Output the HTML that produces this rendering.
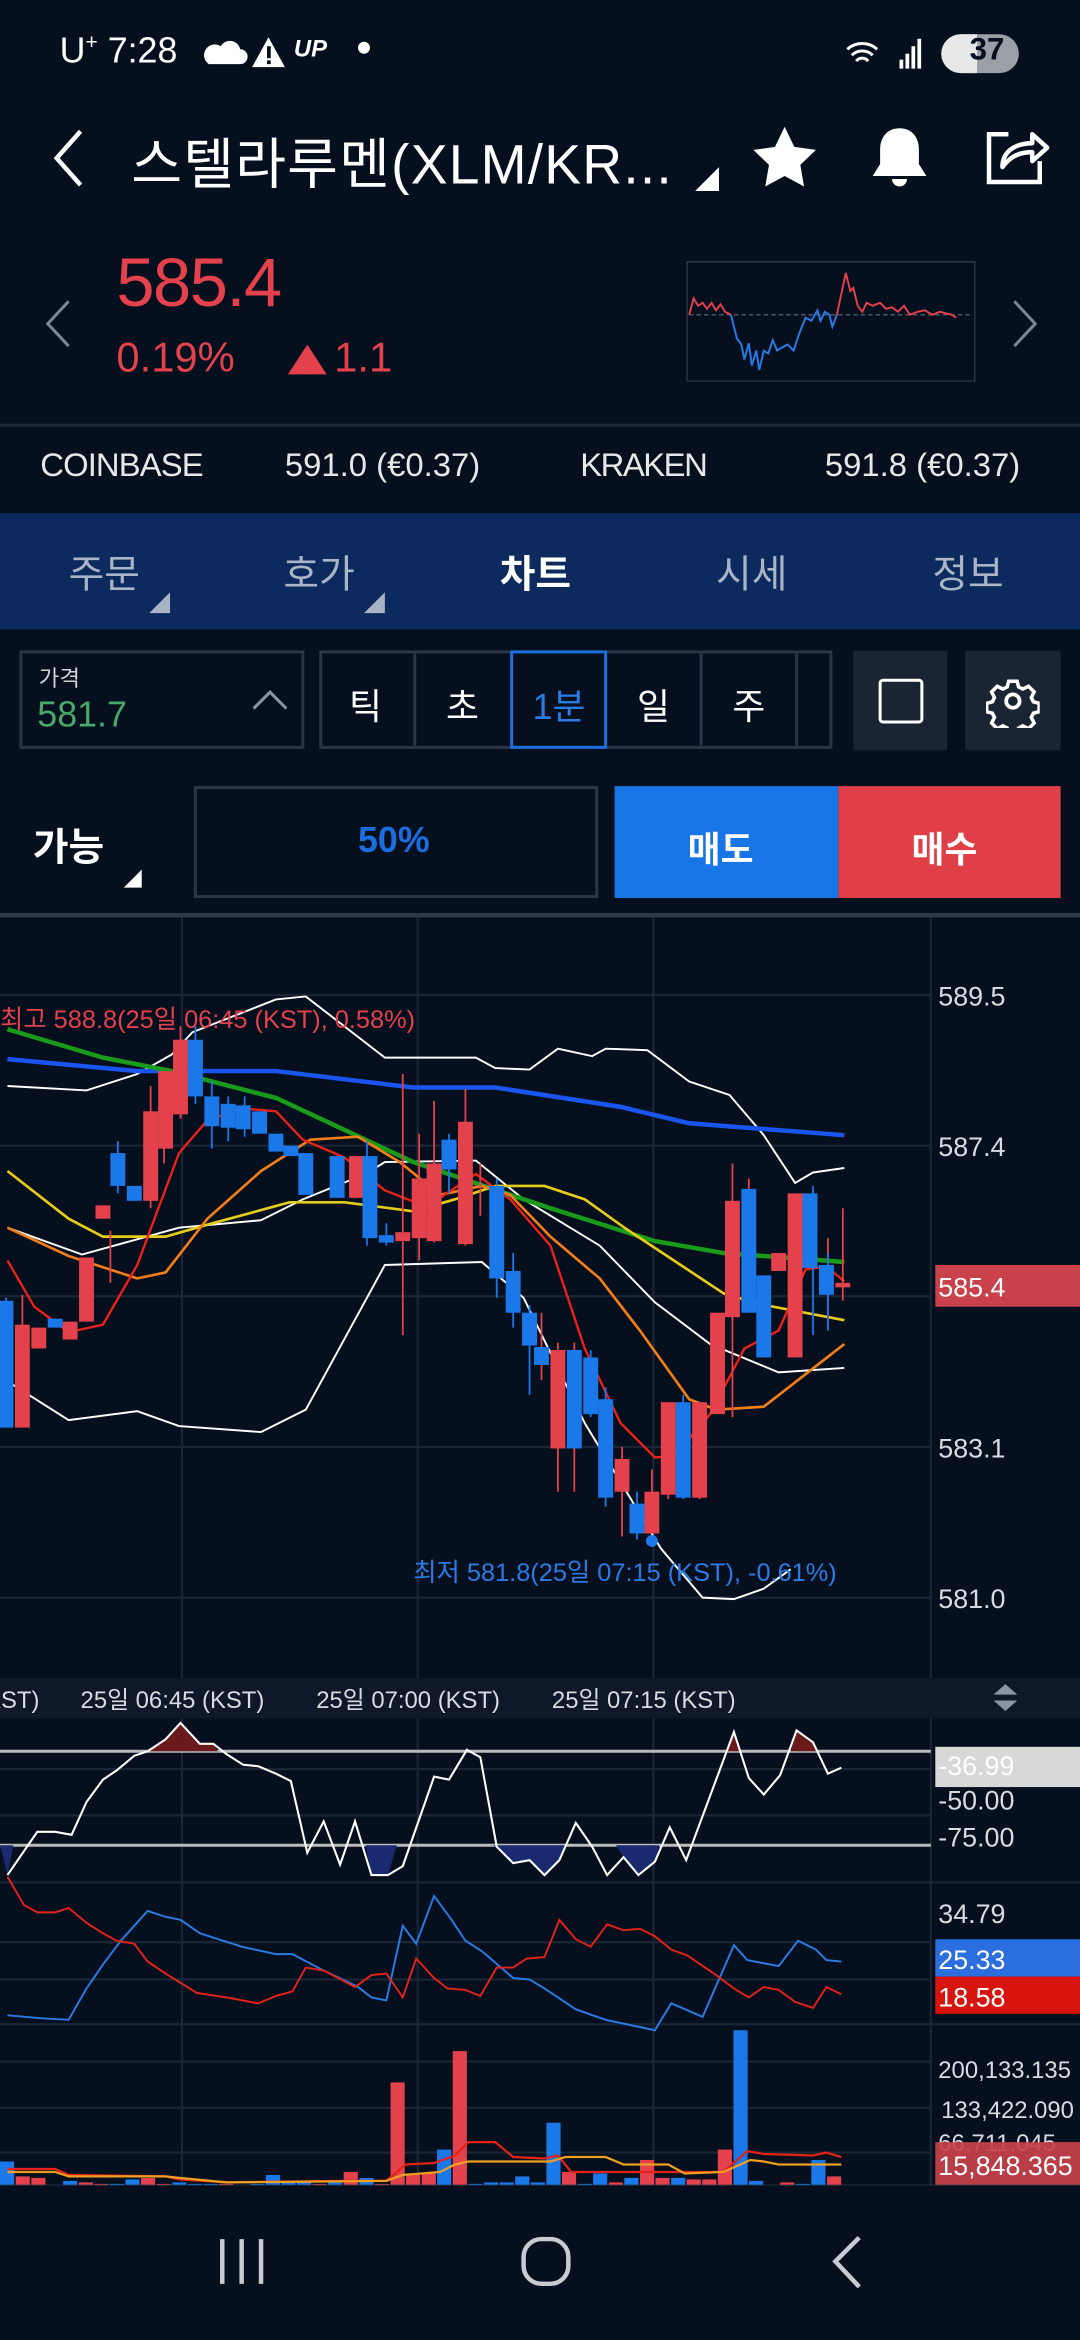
<!DOCTYPE html>
<html><head><meta charset="utf-8">
<style>
*{margin:0;padding:0;box-sizing:border-box}
html,body{width:1080px;height:2340px;background:#050f1e;overflow:hidden}
#w{position:absolute;left:0;top:0;width:724px;height:1568px;transform:scale(1.49172);transform-origin:0 0;font-family:"Liberation Sans","Noto Sans CJK KR",sans-serif;color:#fff}
.a{position:absolute;white-space:nowrap}
</style></head><body><div id="w">
<!-- status -->
<div class="a" style="left:40px;top:20px;font-size:24px;">U<sup style="font-size:14px">+</sup> 7:28</div>
<svg class="a" style="left:136px;top:26px" width="30" height="20"><path d="M4 17h21a5 5 0 0 0 0-10 7 7 0 0 0-13-2 6 6 0 0 0-8 12z" fill="#fff"/></svg>
<svg class="a" style="left:168px;top:24px" width="24" height="22"><path d="M12 1L23 21H1Z" fill="#fff"/><rect x="11" y="7" width="2.5" height="8" fill="#050f1e"/><rect x="11" y="16.5" width="2.5" height="2.5" fill="#050f1e"/></svg>
<div class="a" style="left:197px;top:25px;font-size:16px;font-style:italic;font-weight:bold">UP</div>
<div class="a" style="left:240px;top:28px;width:8px;height:8px;border-radius:4px;background:#fff"></div>
<svg class="a" style="left:566px;top:24px" width="56" height="24"><path d="M2 9a15 15 0 0 1 20 0M5 13a10 10 0 0 1 14 0M8 17a5 5 0 0 1 8 0" stroke="#fff" stroke-width="2" fill="none"/><rect x="37" y="16" width="2.5" height="6" fill="#fff"/><rect x="41" y="12" width="2.5" height="10" fill="#fff"/><rect x="45" y="7" width="2.5" height="15" fill="#fff"/><rect x="49" y="2" width="2.5" height="20" fill="#fff"/></svg>
<div class="a" style="left:631px;top:23px;width:52px;height:26px;border-radius:13px;background:#9aa0a8;"></div>
<div class="a" style="left:631px;top:23px;width:24px;height:26px;border-radius:13px 0 0 13px;background:#e8e8e8;"></div>
<div class="a" style="left:650px;top:22px;font-size:21px;color:#050f1e;font-weight:bold">37</div>
<!-- title -->
<svg class="a" style="left:30px;top:84px" width="30" height="44"><path d="M24 4L8 22l16 18" stroke="#fff" stroke-width="3" fill="none"/></svg>
<div class="a" style="left:88px;top:80px;font-size:37px;letter-spacing:0.8px">스텔라루멘(XLM/KR...</div>
<svg class="a" style="left:464px;top:110px" width="20" height="20"><path d="M18 2V18H2Z" fill="#fff"/></svg>
<svg class="a" style="left:502px;top:82px" width="48" height="46"><path d="M24 3l6.5 13.5 14.5 2-10.5 10 2.5 14.5L24 36l-13 7 2.5-14.5L3 18.5l14.5-2z" fill="#fff"/></svg>
<svg class="a" style="left:578px;top:82px" width="50" height="46"><path d="M25 4c-9 0-13 7-13 14v10l-5 8h36l-5-8V18c0-7-4-14-13-14z M20 38a5 5 0 0 0 10 0z" fill="#fff"/></svg>
<svg class="a" style="left:656px;top:82px" width="50" height="44"><path d="M20 8H7V40h34V26" stroke="#fff" stroke-width="3" fill="none"/><path d="M16 30c0-10 8-16 20-16V8l10 9-10 9v-6c-9 0-15 3-20 10z" fill="none" stroke="#fff" stroke-width="3" stroke-linejoin="round"/></svg>
<!-- price -->
<svg class="a" style="left:28px;top:200px" width="22" height="34"><path d="M18 2L4 17l14 15" stroke="#7c8696" stroke-width="2" fill="none"/></svg>
<svg class="a" style="left:676px;top:200px" width="22" height="34"><path d="M4 2l14 15L4 32" stroke="#7c8696" stroke-width="2" fill="none"/></svg>
<div class="a" style="left:78px;top:162px;font-size:46px;color:#e3414b;letter-spacing:-1px">585.4</div>
<div class="a" style="left:78px;top:224px;font-size:28px;color:#e3414b">0.19%</div>
<svg class="a" style="left:192px;top:230px" width="28" height="22"><path d="M14 1L27 21H1Z" fill="#e3414b"/></svg>
<div class="a" style="left:224px;top:224px;font-size:28px;color:#e3414b">1.1</div>
<svg class="a" style="left:460px;top:175px" width="194" height="81"><rect x="0.5" y="0.5" width="193" height="80" fill="none" stroke="#2b3646"/>
<line x1="2" y1="36" x2="190" y2="36" stroke="#4a5566" stroke-dasharray="3 2" stroke-width="1"/>
<path d="M2 36L5 25 8 30 11 28 14 32 17 28 20 33 23 29 26 34 30 36" stroke="#e3414b" fill="none" stroke-width="1.3"/>
<path d="M30 36L34 52 37 56 39 66 42 55 44 70 47 60 49 73 52 60 55 62 58 53 61 60 64 58 68 56 72 60 76 48 80 38 84 40 88 33 90 40 93 34 96 36 98 44 101 36" stroke="#2a7be6" fill="none" stroke-width="1.3"/>
<path d="M101 36L104 22 107 8 110 20 112 18 115 30 118 34 121 28 125 30 130 28 134 32 138 31 142 34 146 30 150 36 155 34 160 33 165 36 170 34 178 36 181 38" stroke="#e3414b" fill="none" stroke-width="1.3"/>
</svg>
<div class="a" style="left:0;top:284px;width:724px;height:2px;background:#1c2736"></div>
<div class="a" style="left:27px;top:299px;font-size:22px;letter-spacing:-0.6px;color:#e8e8e8">COINBASE</div>
<div class="a" style="left:191px;top:299px;font-size:22px;color:#e8e8e8">591.0 (€0.37)</div>
<div class="a" style="left:389px;top:299px;font-size:22px;letter-spacing:-1px;color:#e8e8e8">KRAKEN</div>
<div class="a" style="left:553px;top:299px;font-size:22px;color:#e8e8e8">591.8 (€0.37)</div>
<!-- tabs -->
<div class="a" style="left:0;top:344px;width:724px;height:78px;background:#0c2a5e"></div>
<div class="a" style="left:46px;top:365px;font-size:26px;color:#a9b4c6">주문</div>
<svg class="a" style="left:99px;top:396px" width="16" height="16"><path d="M15 1V15H1Z" fill="#a9b4c6"/></svg>
<div class="a" style="left:190px;top:365px;font-size:26px;color:#a9b4c6">호가</div>
<svg class="a" style="left:243px;top:396px" width="16" height="16"><path d="M15 1V15H1Z" fill="#a9b4c6"/></svg>
<div class="a" style="left:335px;top:365px;font-size:26px;font-weight:bold;color:#fff">차트</div>
<div class="a" style="left:480px;top:365px;font-size:26px;color:#a9b4c6">시세</div>
<div class="a" style="left:625px;top:365px;font-size:26px;color:#a9b4c6">정보</div>
<!-- controls -->
<div class="a" style="left:13px;top:436px;width:191px;height:66px;border:2px solid #2a3545"></div>
<div class="a" style="left:26px;top:444px;font-size:15px;color:#d0d4da">가격</div>
<div class="a" style="left:25px;top:466px;font-size:24px;color:#49a96a">581.7</div>
<svg class="a" style="left:168px;top:460px" width="26" height="18"><path d="M2 15L13 4l11 11" stroke="#8a94a3" stroke-width="2" fill="none"/></svg>
<div class="a" style="left:214px;top:436px;width:344px;height:66px;border:2px solid #2a3545"></div>
<div class="a" style="left:277px;top:438px;width:2px;height:62px;background:#2a3545"></div>
<div class="a" style="left:405px;top:438px;width:2px;height:62px;background:#2a3545"></div>
<div class="a" style="left:469px;top:438px;width:2px;height:62px;background:#2a3545"></div>
<div class="a" style="left:533px;top:438px;width:2px;height:62px;background:#2a3545"></div>
<div class="a" style="left:342px;top:436px;width:65px;height:66px;border:2px solid #1a6ee0"></div>
<div class="a" style="left:234px;top:454px;font-size:24px">틱</div>
<div class="a" style="left:299px;top:454px;font-size:24px">초</div>
<div class="a" style="left:357px;top:454px;font-size:24px;color:#2a7be6">1분</div>
<div class="a" style="left:427px;top:454px;font-size:24px">일</div>
<div class="a" style="left:491px;top:454px;font-size:24px">주</div>
<div class="a" style="left:572px;top:436px;width:63px;height:67px;background:#1a2433"></div>
<div class="a" style="left:589px;top:455px;width:30px;height:30px;border:2.5px solid #fff;border-radius:3px"></div>
<div class="a" style="left:647px;top:436px;width:64px;height:67px;background:#1a2433"></div>
<svg class="a" style="left:661px;top:452px" width="36" height="36"><g transform="translate(18 18)" fill="none" stroke="#fff" stroke-width="2.5"><path d="M-3-14h6l1 4 3 1.5 4-2 4 4-2 4 1.5 3 4 1v6l-4 1-1.5 3 2 4-4 4-4-2-3 1.5-1 4h-6l-1-4-3-1.5-4 2-4-4 2-4-1.5-3-4-1v-6l4-1 1.5-3-2-4 4-4 4 2 3-1.5z" transform="scale(0.95)"/><circle r="4.5"/></g></svg>
<div class="a" style="left:22px;top:548px;font-size:26px;font-weight:bold">가능</div>
<svg class="a" style="left:82px;top:582px" width="14" height="14"><path d="M13 1V13H1Z" fill="#fff"/></svg>
<div class="a" style="left:130px;top:527px;width:271px;height:75px;border:2px solid #2a3545"></div>
<div class="a" style="left:240px;top:550px;font-size:24px;color:#1a6ee0;font-weight:bold">50%</div>
<div class="a" style="left:412px;top:527px;width:150px;height:75px;background:#1875e6"></div>
<div class="a" style="left:562px;top:527px;width:149px;height:75px;background:#e13f48"></div>
<div class="a" style="left:461px;top:550px;font-size:24px;font-weight:bold">매도</div>
<div class="a" style="left:611px;top:550px;font-size:24px;font-weight:bold">매수</div>
<div class="a" style="left:0;top:612px;width:724px;height:3px;background:#2c3a4a"></div>
<!-- chart -->
<svg class="a" style="left:0;top:615px" width="724" height="850" viewBox="0 615 724 850">
<g stroke="#1a2636" stroke-width="1.5">
<line x1="122" y1="615" x2="122" y2="1465"/><line x1="280" y1="615" x2="280" y2="1465"/><line x1="438" y1="615" x2="438" y2="1465"/><line x1="624" y1="615" x2="624" y2="1465"/>
<line x1="0" y1="667" x2="624" y2="667"/><line x1="0" y1="768" x2="624" y2="768"/><line x1="0" y1="869" x2="624" y2="869"/><line x1="0" y1="970" x2="624" y2="970"/><line x1="0" y1="1071" x2="624" y2="1071"/>
<line x1="0" y1="1186" x2="624" y2="1186"/><line x1="0" y1="1217" x2="624" y2="1217"/><line x1="0" y1="1262" x2="724" y2="1262"/><line x1="0" y1="1302" x2="624" y2="1302"/><line x1="0" y1="1327" x2="624" y2="1327"/><line x1="0" y1="1357" x2="724" y2="1357"/><line x1="0" y1="1382" x2="624" y2="1382"/><line x1="0" y1="1413" x2="624" y2="1413"/><line x1="0" y1="1443" x2="624" y2="1443"/>
</g>
<!-- bollinger -->
<g stroke="#fff" fill="none" stroke-width="1.3">
<path d="M5 728L58 731 92 720 115 707 129 692 185 670 205 668 258 709 319 709 332 716 355 717 374 703 397 708 406 703 434 704 462 725 489 734 512 761 533 793 545 786 566 783"/>
<path d="M5 823L55 841 120 823 175 818 203 804 245 787 258 779 319 778 351 804 402 835 439 873 476 901 522 920 566 917"/>
<path d="M5 926L46 952 92 946 120 956 175 960 205 945 258 848 323 846 351 870 392 954 443 1038 471 1071 492 1072 512 1065 530 1052"/>
</g>
<!-- MAs -->
<path d="M5 710L92 718 185 718 277 729 332 729 416 742 462 753 566 761" stroke="#1a55f0" fill="none" stroke-width="3"/>
<path d="M5 690L69 709 115 718 185 736 277 779 369 810 439 832 485 840 566 846" stroke="#1a9a1a" fill="none" stroke-width="3"/>
<path d="M5 785L46 817 69 829 111 829 139 821 194 806 231 806 277 812 305 804 332 795 365 795 392 804 420 824 485 867 508 874 566 885" stroke="#e6cc1a" fill="none" stroke-width="1.8"/>
<path d="M5 823L46 842 92 857 111 853 139 817 175 785 208 764 240 762 268 779 295 801 323 795 342 801 369 829 402 857 429 892 462 938 480 945 512 943 566 901" stroke="#f07c1a" fill="none" stroke-width="1.8"/>
<path d="M5 845L23 876 46 893 69 888 92 848 120 773 139 751 162 743 185 745 203 764 231 776 258 798 286 809 319 787 342 804 369 835 392 904 416 954 439 977 452 976 476 948 499 904 522 892 540 851 554 849 566 859" stroke="#e8221a" fill="none" stroke-width="1.6"/>
<!-- candles: wicks -->
<g stroke-width="1.2">
<path d="M15 868V957M74 825V860M101 728V810M110 720V780M121 688V750M270 720V895M281 760V845M291 738V833M312 730V835M322 780V815M363 880V925M374 900V1000M385 900V1000M417 970V1030M437 985V1020M448 955V1005M469 940V1005M491 780V950M502 790V880M555 830V888M565 810V872" stroke="#e3414b"/>
<path d="M4 870V957M79 765V800M131 688V740M142 725V770M153 735V765M164 735V762M246 765V835M259 820V835M301 760V800M333 790V870M344 840V890M355 875V935M396 905V950M406 930V1010M427 1000V1032M458 935V1005M545 795V895M555 840V892" stroke="#1a78e8"/>
</g>
<g fill="#e3414b">
<rect x="10" y="888" width="10" height="69"/><rect x="21" y="890" width="10" height="14"/><rect x="42" y="886" width="10" height="12"/><rect x="53" y="843" width="10" height="43"/><rect x="64" y="808" width="10" height="9"/><rect x="96" y="745" width="10" height="60"/><rect x="106" y="718" width="10" height="52"/><rect x="116" y="697" width="10" height="50"/>
<rect x="234" y="775" width="10" height="28"/><rect x="265" y="826" width="10" height="6"/><rect x="276" y="790" width="10" height="40"/><rect x="286" y="780" width="10" height="52"/><rect x="307" y="752" width="10" height="82"/>
<rect x="369" y="905" width="10" height="66"/><rect x="412" y="978" width="10" height="22"/><rect x="432" y="1000" width="10" height="28"/><rect x="443" y="940" width="10" height="62"/><rect x="464" y="940" width="10" height="64"/><rect x="476" y="880" width="10" height="68"/><rect x="486" y="805" width="10" height="78"/><rect x="517" y="840" width="10" height="12"/><rect x="528" y="800" width="10" height="110"/><rect x="560" y="860" width="10" height="3"/>
</g>
<g fill="#1a78e8">
<rect x="-1" y="872" width="10" height="85"/><rect x="32" y="884" width="10" height="6"/><rect x="74" y="773" width="10" height="22"/><rect x="85" y="795" width="10" height="10"/><rect x="126" y="697" width="10" height="38"/><rect x="137" y="735" width="10" height="20"/><rect x="148" y="740" width="10" height="16"/><rect x="158" y="741" width="10" height="16"/><rect x="169" y="745" width="10" height="15"/><rect x="180" y="760" width="10" height="12"/><rect x="190" y="768" width="10" height="7"/><rect x="200" y="773" width="10" height="28"/><rect x="221" y="775" width="10" height="28"/><rect x="243" y="775" width="10" height="55"/><rect x="254" y="828" width="10" height="5"/><rect x="296" y="764" width="10" height="20"/>
<rect x="328" y="795" width="10" height="62"/><rect x="339" y="852" width="10" height="28"/><rect x="350" y="880" width="10" height="22"/><rect x="358" y="903" width="10" height="12"/><rect x="380" y="905" width="10" height="66"/><rect x="391" y="910" width="10" height="38"/><rect x="401" y="938" width="10" height="66"/><rect x="422" y="1008" width="10" height="20"/><rect x="453" y="940" width="10" height="64"/><rect x="497" y="797" width="10" height="83"/><rect x="507" y="855" width="10" height="55"/><rect x="538" y="800" width="10" height="50"/><rect x="549" y="848" width="10" height="20"/>
</g>
<circle cx="437" cy="1033" r="4" fill="#1a78e8"/>
<text x="0" y="689" font-size="17" fill="#e3414b" font-family="Liberation Sans,Noto Sans CJK KR,sans-serif">최고 588.8(25일 06:45 (KST), 0.58%)</text>
<text x="277" y="1060" font-size="17" fill="#2a7be6" font-family="Liberation Sans,Noto Sans CJK KR,sans-serif">최저 581.8(25일 07:15 (KST), -0.61%)</text>
<g font-size="18" fill="#d8dce2" font-family="Liberation Sans,sans-serif"><text x="629" y="674">589.5</text><text x="629" y="775">587.4</text><text x="629" y="977">583.1</text><text x="629" y="1078">581.0</text></g>
<rect x="627" y="848" width="97" height="28" fill="#c8414b"/>
<text x="629" y="869" font-size="18" fill="#fff" font-family="Liberation Sans,sans-serif">585.4</text>
<!-- time axis -->
<rect x="0" y="1125" width="724" height="27" fill="#0e1828"/>
<g font-size="16" fill="#d8dce2" font-family="Liberation Sans,Noto Sans CJK KR,sans-serif"><text x="-10" y="1145">KST)</text><text x="54" y="1145">25일 06:45 (KST)</text><text x="212" y="1145">25일 07:00 (KST)</text><text x="370" y="1145">25일 07:15 (KST)</text></g>
<path d="M666 1136l8-7 8 7zM666 1140l8 7 8-7z" fill="#8a94a3"/>
<!-- RSI panel -->
<line x1="0" y1="1174" x2="624" y2="1174" stroke="#bbb" stroke-width="2"/>
<line x1="0" y1="1237" x2="624" y2="1237" stroke="#bbb" stroke-width="2"/>
<path d="M99 1174L111 1166 121 1155 134 1169 143 1169 146 1174ZM488 1174L492 1161 496 1174ZM530 1174L534 1160 545 1168 547 1174Z" fill="#6a1a1a"/>
<path d="M0 1237L5 1257 9 1237ZM245 1237L249 1257 260 1257 266 1237ZM330 1237L333 1238 344 1249 355 1247 365 1257 375 1247 380 1237ZM413 1237L418 1245 428 1257 439 1248 442 1237Z" fill="#1a2a70"/>
<path d="M5 1257L25 1228 37 1228 48 1230 58 1208 69 1193 78 1187 90 1177 99 1174 111 1166 121 1155 134 1169 143 1169 152 1176 163 1183 173 1184 185 1189 195 1194 206 1242 217 1221 228 1250 238 1221 249 1257 260 1257 270 1251 291 1191 301 1193 313 1173 322 1178 333 1238 344 1249 355 1247 365 1257 375 1247 386 1222 397 1238 407 1257 418 1245 428 1257 439 1248 449 1225 460 1247 492 1161 502 1192 512 1203 523 1190 534 1160 545 1168 555 1189 564 1185" stroke="#fff" fill="none" stroke-width="1.4"/>
<rect x="627" y="1171" width="97" height="27" fill="#d8d8d8"/>
<g font-size="18" fill="#d8dce2" font-family="Liberation Sans,sans-serif"><text x="629" y="1190" fill="#fff">-36.99</text><text x="629" y="1213">-50.00</text><text x="629" y="1238">-75.00</text></g>
<!-- DMI panel -->
<path d="M5 1351L28 1353 46 1354 58 1333 69 1317 81 1301 99 1281 111 1285 121 1287 134 1296 162 1305 185 1310 196 1310 217 1321 240 1332 249 1339 259 1341 270 1291 279 1303 291 1271 302 1286 312 1301 323 1308 344 1326 355 1327 365 1333 386 1347 406 1354 439 1361 450 1343 471 1352 492 1304 501 1314 522 1318 535 1301 547 1307 554 1314 564 1315" stroke="#2a7be6" fill="none" stroke-width="1.3"/>
<path d="M5 1258L16 1277 25 1282 37 1282 46 1279 58 1289 69 1296 78 1301 90 1303 99 1315 111 1323 132 1336 152 1339 173 1343 185 1338 196 1335 205 1319 217 1321 238 1332 249 1324 259 1323 270 1339 279 1313 291 1326 300 1333 312 1334 322 1338 333 1319 344 1319 353 1313 365 1312 375 1287 386 1300 396 1305 407 1290 418 1294 429 1293 439 1298 450 1307 461 1311 480 1324 492 1333 502 1339 512 1332 522 1334 533 1342 545 1346 554 1332 564 1337" stroke="#e3221a" fill="none" stroke-width="1.3"/>
<g font-size="18" fill="#d8dce2" font-family="Liberation Sans,sans-serif"><text x="629" y="1289">34.79</text></g>
<rect x="627" y="1300" width="97" height="25" fill="#2a6ee0"/>
<rect x="627" y="1325" width="97" height="25" fill="#d8140f"/>
<g font-size="18" fill="#fff" font-family="Liberation Sans,sans-serif"><text x="629" y="1320">25.33</text><text x="629" y="1345">18.58</text></g>
<!-- volume -->
<g fill="#1a78e8">
<rect x="0" y="1449" width="9.5" height="16"/><rect x="42.3" y="1462" width="9.5" height="3"/><rect x="73.6" y="1464" width="9.5" height="1"/><rect x="84.1" y="1461" width="9.5" height="4"/><rect x="115.5" y="1463" width="9.5" height="2"/><rect x="125.9" y="1464" width="9.5" height="1"/><rect x="136.4" y="1464" width="9.5" height="1"/><rect x="167.7" y="1464" width="9.5" height="1"/><rect x="178.2" y="1458" width="9.5" height="7"/><rect x="188.6" y="1462" width="9.5" height="3"/><rect x="199.1" y="1463" width="9.5" height="2"/><rect x="220" y="1463" width="9.5" height="2"/><rect x="240.9" y="1460" width="9.5" height="5"/><rect x="293" y="1441" width="9.5" height="24"/><rect x="314" y="1464" width="9.5" height="1"/><rect x="324.5" y="1463" width="9.5" height="2"/><rect x="334.9" y="1463" width="9.5" height="2"/><rect x="345.4" y="1459" width="9.5" height="6"/><rect x="355.8" y="1463" width="9.5" height="2"/><rect x="366.3" y="1423" width="9.5" height="42"/><rect x="387.2" y="1464" width="9.5" height="1"/><rect x="397.6" y="1457" width="9.5" height="8"/><rect x="418.5" y="1460" width="9.5" height="5"/><rect x="449.9" y="1460" width="9.5" height="5"/><rect x="491.7" y="1361" width="9.5" height="104"/><rect x="502.1" y="1462" width="9.5" height="3"/><rect x="533.5" y="1464" width="9.5" height="1"/><rect x="543.9" y="1448" width="9.5" height="17"/>
</g>
<g fill="#e3414b">
<rect x="10.5" y="1459" width="9.5" height="6"/><rect x="21" y="1460" width="9.5" height="5"/><rect x="52.8" y="1463" width="9.5" height="2"/><rect x="63.2" y="1464" width="9.5" height="1"/><rect x="94.5" y="1460" width="9.5" height="5"/><rect x="105" y="1464" width="9.5" height="1"/><rect x="146.8" y="1464" width="9.5" height="1"/><rect x="209.5" y="1464" width="9.5" height="1"/><rect x="230.4" y="1456" width="9.5" height="9"/><rect x="251.3" y="1464" width="9.5" height="1"/><rect x="261.8" y="1396" width="9.5" height="69"/><rect x="272.2" y="1457" width="9.5" height="8"/><rect x="282.7" y="1457" width="9.5" height="8"/><rect x="303.5" y="1375" width="9.5" height="90"/><rect x="376.7" y="1456" width="9.5" height="9"/><rect x="408.1" y="1463" width="9.5" height="2"/><rect x="429" y="1448" width="9.5" height="17"/><rect x="439.4" y="1460" width="9.5" height="5"/><rect x="460.3" y="1461" width="9.5" height="4"/><rect x="470.8" y="1461" width="9.5" height="4"/><rect x="481.2" y="1441" width="9.5" height="24"/><rect x="523" y="1463" width="9.5" height="2"/><rect x="554.4" y="1459" width="9.5" height="6"/>
</g>
<path d="M5 1454L37 1454 46 1458 111 1459 120 1461 152 1463 231 1462 259 1462 272 1451 291 1450 305 1445 314 1436 332 1436 344 1446 365 1447 374 1445 383 1456 485 1456 501 1442 512 1444 545 1445 554 1443 564 1446" stroke="#e3221a" fill="none" stroke-width="1.5"/>
<path d="M5 1456L37 1456 46 1459 111 1459 120 1460 152 1463 259 1462 270 1458 295 1456 305 1451 314 1449 369 1449 379 1446 406 1446 418 1451 448 1451 459 1457 485 1456 503 1448 512 1449 522 1451 564 1451" stroke="#f0a020" fill="none" stroke-width="1.5"/>
<g font-size="16" fill="#d8dce2" font-family="Liberation Sans,sans-serif"><text x="629" y="1393">200,133.135</text><text x="631" y="1420">133,422.090</text><text x="629" y="1442">66,711.045</text></g>
<rect x="627" y="1436" width="97" height="29" fill="#c8414b" opacity="0.92"/>
<text x="629" y="1458" font-size="18" fill="#fff" font-family="Liberation Sans,sans-serif">15,848.365</text>
<line x1="0" y1="1465" x2="724" y2="1465" stroke="#2c3a4a" stroke-width="1"/>
</svg>
<!-- nav -->
<div class="a" style="left:0;top:1466px;width:724px;height:102px;background:#050f1e"></div>
<svg class="a" style="left:140px;top:1495px" width="460" height="50"><g stroke="#c8ccd2" stroke-width="3" fill="none"><path d="M9 6v30M22 6v30M35 6v30"/><rect x="211" y="6" width="30" height="30" rx="12"/><path d="M436 5L420 21l16 17"/></g></svg>
</div></body></html>
